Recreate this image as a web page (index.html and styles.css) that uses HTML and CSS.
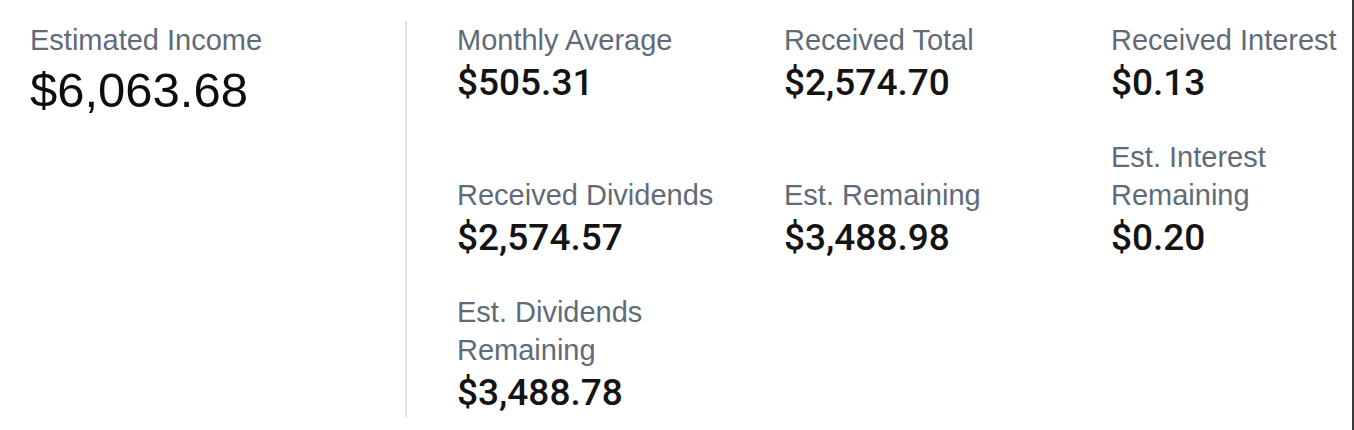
FILE: index.html
```html
<!DOCTYPE html>
<html lang="en">
<head>
<meta charset="utf-8">
<title>Income Summary</title>
<link rel="stylesheet" href="styles.css">
</head>
<body>
<main class="income">
  <section class="total">
    <div class="label">Estimated Income</div>
    <div class="total-value">$6,063.68</div>
  </section>
  <section class="breakdown">
    <div class="stat">
      <div class="label">Monthly Average</div>
      <div class="value">$505.31</div>
    </div>
    <div class="stat">
      <div class="label">Received Total</div>
      <div class="value">$2,574.70</div>
    </div>
    <div class="stat">
      <div class="label">Received Interest</div>
      <div class="value">$0.13</div>
    </div>
    <div class="stat">
      <div class="label">Received Dividends</div>
      <div class="value">$2,574.57</div>
    </div>
    <div class="stat">
      <div class="label">Est. Remaining</div>
      <div class="value">$3,488.98</div>
    </div>
    <div class="stat">
      <div class="label">Est. Interest<br>Remaining</div>
      <div class="value">$0.20</div>
    </div>
    <div class="stat">
      <div class="label">Est. Dividends<br>Remaining</div>
      <div class="value">$3,488.78</div>
    </div>
  </section>
</main>
</body>
</html>
```
FILE: styles.css
```css
html, body {
  margin: 0;
  padding: 0;
  background: #ffffff;
}

body {
  box-sizing: border-box;
  min-height: 430px;
  border-right: 2px solid #3c3c3c;
  font-family: "Liberation Sans", Arial, sans-serif;
  color: #111111;
}

.income {
  display: flex;
  align-items: stretch;
  padding-top: 21px;
}

.total {
  flex: 0 0 405px;
  box-sizing: border-box;
  padding-left: 30px;
}

.label {
  font-family: "Liberation Sans", Arial, sans-serif;
  font-size: 29px;
  line-height: 38px;
  color: #5f6b79;
}

.total-value {
  font-family: "Liberation Sans", Arial, sans-serif;
  font-size: 49px;
  line-height: 62px;
  color: #0d0d0d;
}

.breakdown {
  flex: 1 1 auto;
  border-left: 2px solid #e0e0e0;
  padding-left: 50px;
  display: grid;
  grid-template-columns: 327px 327px 1fr;
  row-gap: 31px;
  align-items: end;
}

.value {
  font-family: Roboto, "Liberation Sans", sans-serif;
  font-weight: 500;
  font-size: 37px;
  line-height: 48px;
  color: #141414;
}
```
